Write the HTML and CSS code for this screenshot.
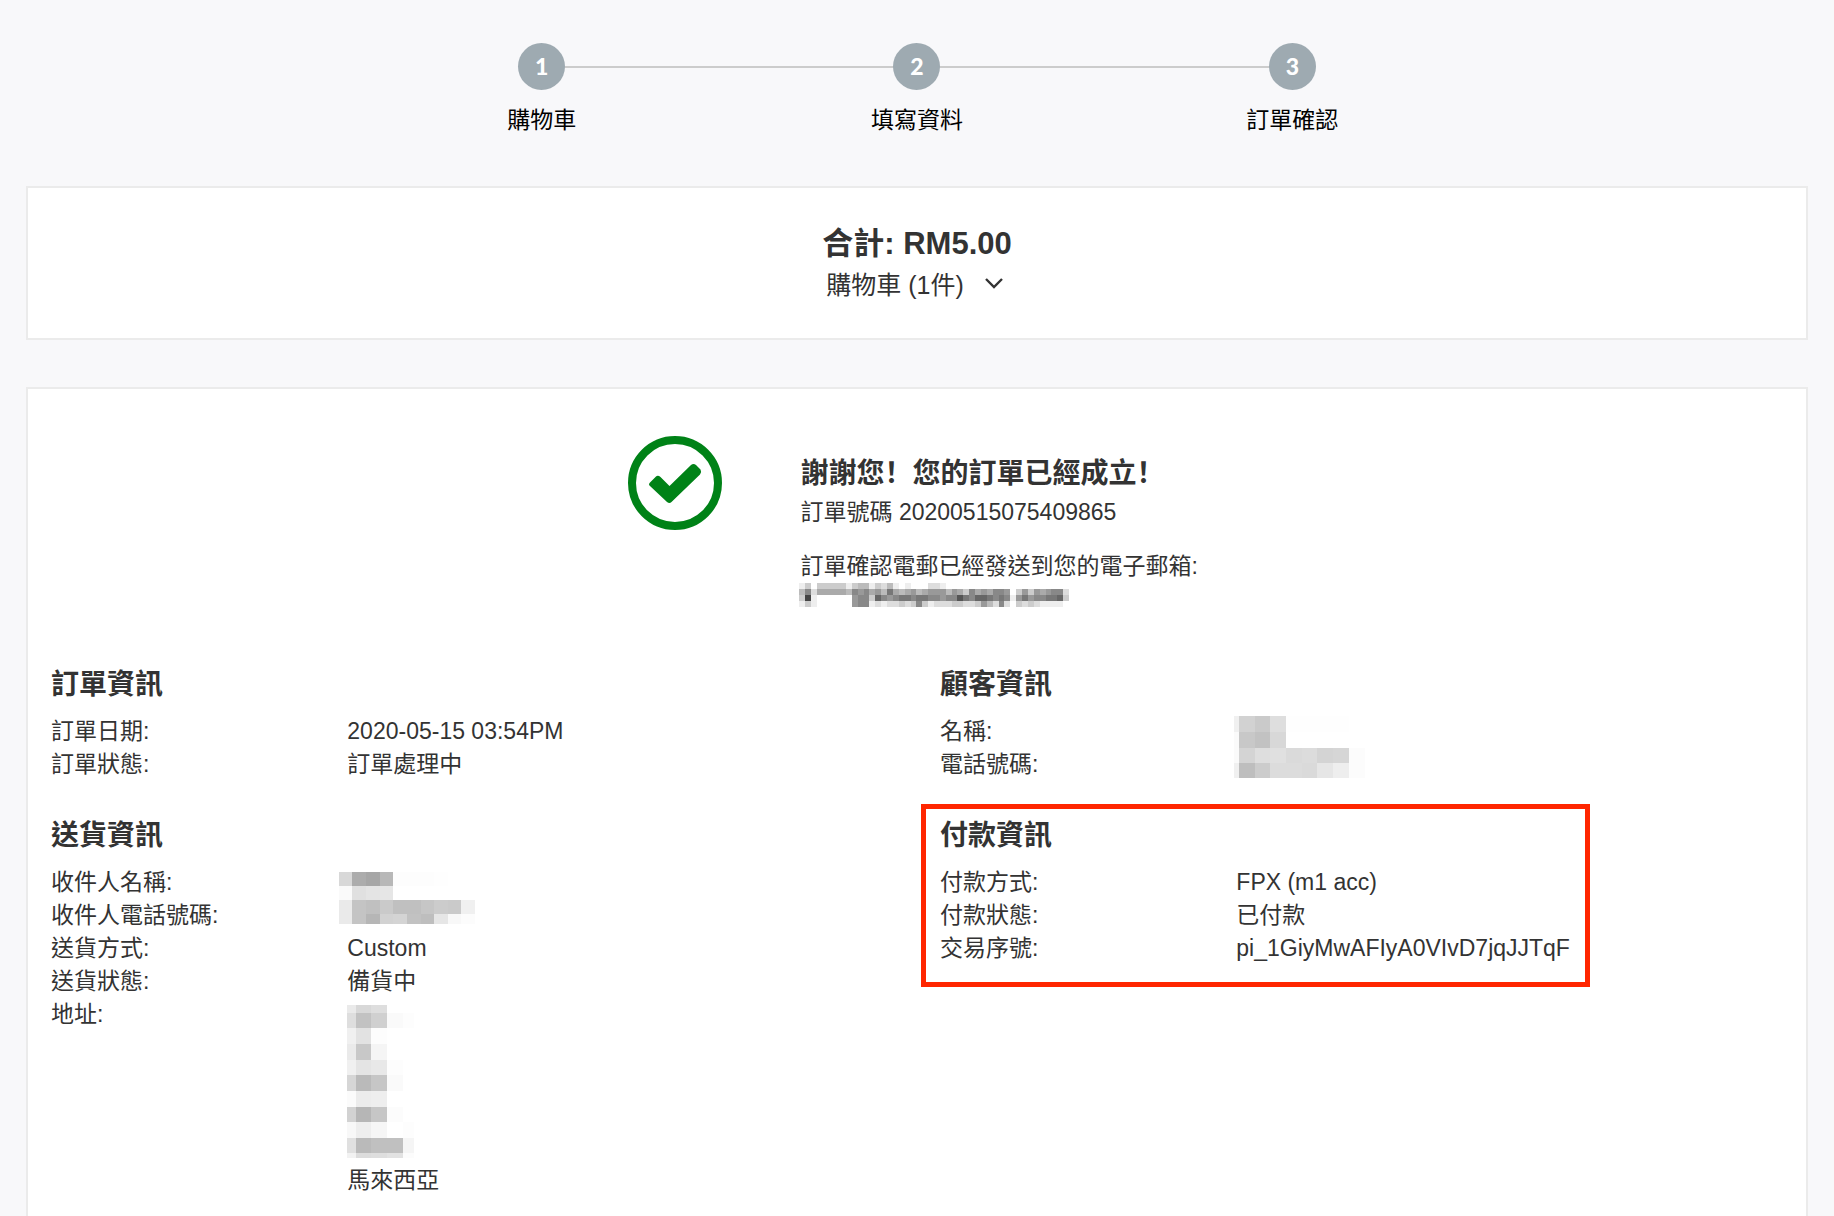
FILE: index.html
```
<!DOCTYPE html>
<html lang="zh-Hant">
<head>
	<meta charset="utf-8">
	<title>訂單確認</title>
	<meta name="viewport" content="width=device-width, initial-scale=1.0">
	<link rel="stylesheet" href="styles.css">
</head>
<body>
	<ol class="steps">
		<li><span class="num">1</span>購物車</li>
		<li><span class="num">2</span>填寫資料</li>
		<li><span class="num">3</span>訂單確認</li>
	</ol>

	<section class="card total">
		<h2>合計: RM5.00</h2>
		<button type="button" class="toggle">
			購物車 (1件)
			<svg width="18" height="12" viewBox="0 0 18 12"><path d="M1 2l8 8 8-8" fill="none" stroke="#333" stroke-width="2.400"/></svg>
		</button>
	</section>

	<main class="card order">
		<div class="thanks">
			<svg class="check" width="94" height="94" viewBox="0 0 94 94">
				<circle cx="47" cy="47" r="43" fill="none" stroke="#008217" stroke-width="8"/>
				<path d="M22 46.500L28 40.500Q30 39 32.500 41L41.500 50L63 29Q65.500 27 68 29L72.500 33.500Q74 36 72 38.500L43.500 66Q41.500 68 39 66L22 50Q20 48.500 22 46.500Z" fill="#008217"/>
			</svg>
			<div class="message">
				<h3>謝謝您<span class="mark" lang="zh-Hans">！</span>您的訂單已經成立<span class="mark" lang="zh-Hans">！</span></h3>
				<p class="number">訂單號碼 20200515075409865</p>
				<p>訂單確認電郵已經發送到您的電子郵箱:</p>
				<svg class="mosaic" id="email" width="270" height="24"></svg>
			</div>
		</div>

		<div class="info">
			<div class="col">
				<section>
					<h3>訂單資訊</h3>
					<dl>
						<dt>訂單日期:</dt><dd>2020-05-15 03:54PM</dd>
						<dt>訂單狀態:</dt><dd>訂單處理中</dd>
					</dl>
				</section>
				<section>
					<h3>送貨資訊</h3>
					<dl>
						<dt>收件人名稱:</dt>
						<dd class="two-rows wide"><svg class="mosaic" id="receiver" width="136" height="52"></svg></dd>
						<dt>收件人電話號碼:</dt>
						<dt>送貨方式:</dt><dd>Custom</dd>
						<dt>送貨狀態:</dt><dd>備貨中</dd>
						<dt>地址:</dt>
						<dd>
							<div class="address"><svg class="mosaic" id="address" width="67" height="153"></svg></div>
							馬來西亞
						</dd>
					</dl>
				</section>
			</div>
			<div class="col">
				<section>
					<h3>顧客資訊</h3>
					<dl>
						<dt>名稱:</dt>
						<dd class="two-rows"><svg class="mosaic" id="customer" width="131" height="62"></svg></dd>
						<dt>電話號碼:</dt>
					</dl>
				</section>
				<section class="marked">
					<h3>付款資訊</h3>
					<dl>
						<dt>付款方式:</dt><dd>FPX (m1 acc)</dd>
						<dt>付款狀態:</dt><dd>已付款</dd>
						<dt>交易序號:</dt><dd>pi_1GiyMwAFIyA0VIvD7jqJJTqF</dd>
					</dl>
				</section>
			</div>
		</div>
	</main>

	<script>
		// w = column widths, h = row heights, rows = grey level of every cell
		let mosaics = {
			email: {
				w: Array(46).fill(6),
				h: [6, 6, 6, 6],
				rows: [
					"e c f c c c c c e c b b e c d b e f e f f f d d e f f f f f f f f f f f f f f f f f f f f f",
					"b 8 d a a a a a b 8 9 8 a 9 b 7 a b a 9 b a 9 9 9 b 9 a c 8 a 9 a 8 8 9 f c 9 c 9 a 9 8 8 d",
					"c 4 e f f f f f f 9 8 8 c 6 8 9 8 7 7 8 7 7 8 8 9 8 8 5 7 8 6 6 7 8 7 8 e 9 7 9 8 8 7 7 6 c",
					"e c e f f f f f f 9 8 8 e d e d d c d c 8 c e d d d c c d d c 9 b d 8 d f c d c d e e e e f"
				]
			},
			receiver: {
				w: [13, 14, 14, 13, 14, 14, 13, 14, 13, 14],
				h: [14, 14, 14, 10],
				rows: [
					"d8 ac a6 b8 fd fd fd fe ff ff",
					"fa e0 e4 e6 ff ff ff ff ff ff",
					"ea c4 c0 ca c0 c0 c6 cc ca f0",
					"ea c4 b6 d2 d4 c2 be e6 f8 fc"
				]
			},
			customer: {
				w: [5, 16, 15, 16, 16, 15, 16, 16, 16],
				h: [16, 16, 15, 15],
				rows: [
					"f0 d2 ca de fe fe fe fe ff",
					"fa c8 c2 d8 ff ff ff ff ff",
					"fa d4 de e0 da dc d4 d6 fc",
					"f0 be cc dc dc da e6 ee fc"
				]
			},
			address: {
				w: [9, 15, 16, 16, 11],
				h: [8, 15, 16, 16, 15, 16, 16, 15, 16, 15, 5],
				rows: [
					"ea d8 de ff ff",
					"de c2 d0 fa fd",
					"f0 e2 fd ff ff",
					"ea c8 f5 ff ff",
					"f0 e4 e8 fd ff",
					"d6 ba c6 fa ff",
					"fb ec ee ff ff",
					"d2 b6 c6 fc ff",
					"f8 ee f6 ff fd",
					"e0 ba c0 c0 f5",
					"f2 dc de e2 fc"
				]
			}
		}

		function drawMosaic(id, m){
			let out = ""
			let y = 0
			let x = 0
			m.rows.forEach((row, r)=>{
				x = 0
				row.split(" ").forEach((grey, c)=>{
					out += `<rect x="${x}" y="${y}" width="${m.w[c]}" height="${m.h[r]}" fill="#${grey.repeat(3)}"/>`
					x += m.w[c]
				})
				y += m.h[r]
			})
			let svg = document.getElementById(id)
			svg.setAttribute("viewBox", `0 0 ${x} ${y}`)
			svg.setAttribute("preserveAspectRatio", "none")
			svg.innerHTML = out
		}

		for (let id in mosaics) drawMosaic(id, mosaics[id])
	</script>
</body>
</html>
```
FILE: styles.css
```
*, *::before, *::after{
	box-sizing: border-box;
}
body{
	display: flex;
	flex-direction: column;
	min-height: 100vh;
	margin: 0;
	padding: 43px 26px 0;
	background: #f8f8fa;
	color: #333;
	font-family: "Liberation Sans", "Noto Sans CJK TC", sans-serif;
	font-size: 23px;
	line-height: 33px;
}
h2, h3, p, dl, dd, ol{
	margin: 0;
	padding: 0;
}
h3{
	font-size: 28px;
	line-height: 37px;
}

/* steps */
.steps{
	display: flex;
	width: 100%;
	max-width: 1126px;
	margin: 0 auto 49px;
	list-style: none;
	color: #000;
}
.steps li{
	flex: 1;
	display: flex;
	flex-direction: column;
	align-items: center;
	gap: 14px;
	position: relative;
}
.steps li + li::before{
	content: "";
	position: absolute;
	top: 23px;
	right: 50%;
	width: 100%;
	height: 2px;
	background: #ccc;
}
.num{
	position: relative;
	z-index: 1;
	width: 47px;
	height: 47px;
	border-radius: 50%;
	background: #9eaab1;
	color: #fff;
	font-family: Lato, sans-serif;
	font-weight: 900;
	line-height: 47px;
	text-align: center;
}

/* cards */
.card{
	background: #fff;
	border: 2px solid #ebebeb;
}
.total{
	display: flex;
	flex-direction: column;
	align-items: center;
	margin-bottom: 47px;
	padding: 35px 22px 37px;
}
.total h2{
	font-size: 31px;
	line-height: 41px;
}
.toggle{
	display: flex;
	align-items: center;
	gap: 21px;
	height: 37px;
	padding: 0 5px 0 0;
	border: 0;
	background: none;
	color: inherit;
	font-family: inherit;
	font-size: 25px;
	cursor: pointer;
}
.order{
	flex: 1;
	border-bottom: 0;
	padding: 47px 0 20px;
}

.thanks{
	display: flex;
	justify-content: center;
	gap: 79px;
	margin-bottom: 59px;
}
.message{
	min-width: 406px;
	padding-top: 17px;
}
.number{
	margin: 4px 0 21px;
}
.mark{
	font-family: "Noto Sans CJK SC", sans-serif;
}
.mosaic{
	display: block;
	shape-rendering: crispEdges;
}
#email{
	margin-left: -2px;
}

/* order details */
.info{
	display: grid;
	grid-template-columns: 1fr 1fr;
}
.info section{
	position: relative;
	margin-bottom: 36px;
}
.info h3{
	margin-bottom: 12px;
	padding-left: 23px;
}
dl{
	display: grid;
	grid-template-columns: 1fr 2fr;
	grid-auto-rows: minmax(33px, auto);
}
dt, dd{
	padding-left: 23px;
}
.two-rows{
	grid-row: span 2;
	display: flex;
	align-items: center;
	padding: 0 0 2px 21px;
}
.wide{
	padding-left: 15px;
}
.address{
	display: flex;
	align-items: center;
	height: 166px;
}
/* red frame round the payment section */
.marked::after{
	content: "";
	position: absolute;
	top: -13px;
	left: 4px;
	width: 669px;
	height: 183px;
	border: 5px solid #ff2600;
}
```
